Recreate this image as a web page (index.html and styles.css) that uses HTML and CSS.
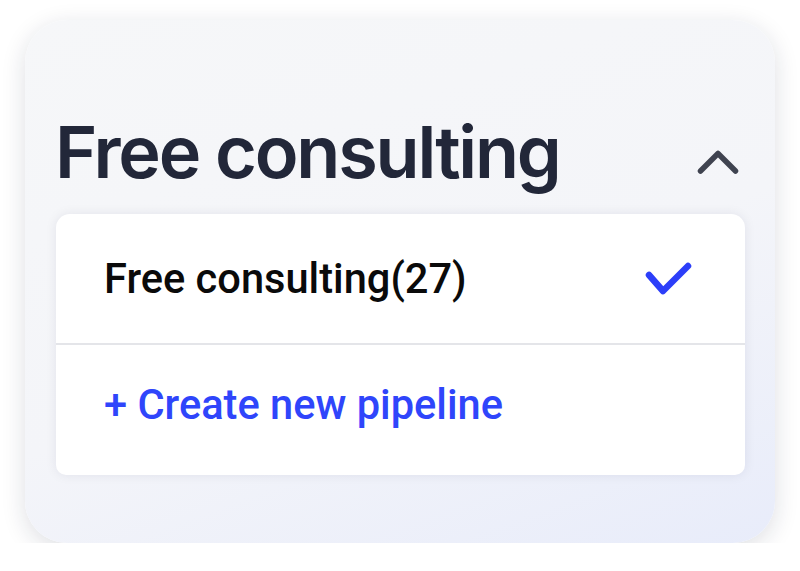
FILE: index.html
```html
<!DOCTYPE html>
<html lang="en">
<head>
  <meta charset="utf-8" />
  <title>Pipeline picker</title>
  <link rel="stylesheet" href="styles.css">
</head>
<body>
  <div class="card">
    <div class="header">
      <h1>Free consulting</h1>
      <svg class="chevron" width="44" height="26" viewBox="0 0 44 26">
        <path d="M4.5 21 L22 3.5 L39.5 21" fill="none" stroke="#3f4350" stroke-width="5.5" stroke-linecap="round" stroke-linejoin="round"/>
      </svg>
    </div>

    <div class="dropdown">
      <div class="option selected">
        <span>Free consulting(27)</span>
        <svg class="check" width="48" height="36" viewBox="0 0 48 36">
          <path d="M4 14 L18 30 L43 5" fill="none" stroke="#2c3ef9" stroke-width="6.5" stroke-linecap="round" stroke-linejoin="round"/>
        </svg>
      </div>
      <div class="option create">+ Create new pipeline</div>
    </div>
  </div>
</body>
</html>
```

FILE: styles.css
```css
* {
  box-sizing: border-box;
}

body {
  margin: 0;
  background: #ffffff;
  font-family: 'Roboto', sans-serif;
}

.card {
  margin: 20px 25px 0;
  width: 750px;
  height: 523px;
  border-radius: 42px;
  background: linear-gradient(160deg, #f6f7f9 0%, #f4f5f9 55%, #e8ecfa 100%);
  box-shadow: 0 6px 24px rgba(20, 30, 60, 0.14);
  padding-top: 96px;
  overflow: hidden;
}

.header {
  display: flex;
  align-items: flex-start;
  justify-content: space-between;
  padding: 0 35px 0 30px;
  height: 98px;
}

h1 {
  margin: 0;
  font-family: 'Inter', sans-serif;
  font-weight: 600;
  font-size: 72px;
  letter-spacing: -2.2px;
  color: #222739;
  line-height: 1;
}

.chevron {
  margin-top: 34px;
}

.dropdown {
  margin-left: 31px;
  width: 689px;
  background: #ffffff;
  border-radius: 14px 14px 10px 10px;
  box-shadow: 0 0 12px rgba(20, 30, 60, 0.08);
}

.option {
  display: flex;
  align-items: center;
  justify-content: space-between;
  padding: 0 52px 0 48px;
  font-size: 41.6px;
  font-weight: 500;
}

.option.selected {
  height: 131px;
  color: #0a0a0a;
  border-bottom: 2px solid #e4e5e9;
}

.option.create {
  height: 130px;
  color: #2f45fb;
  padding-bottom: 12px;
}
```
